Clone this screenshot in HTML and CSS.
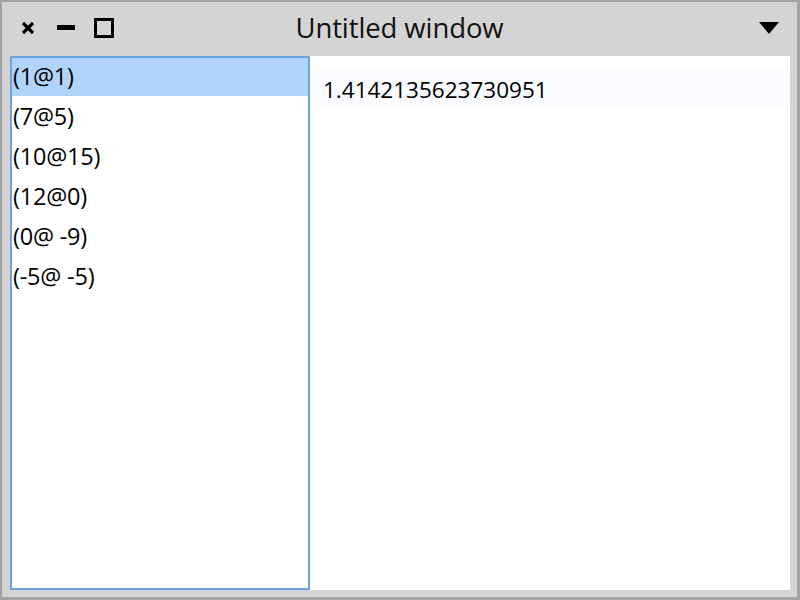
FILE: index.html
```html
<!DOCTYPE html>
<html>
<head>
<meta charset="utf-8">
<link rel="stylesheet" href="styles.css">
</head>
<body>
<div class="window">
  <div class="titlebar">
    <div class="controls">
      <svg class="ico" width="16" height="16" viewBox="0 0 16 16"><path d="M3 3 L13 13 M13 3 L3 13" stroke="#000" stroke-width="3.2" fill="none"/></svg>
      <svg class="ico minus" width="18" height="6" viewBox="0 0 18 6"><rect x="0" y="0" width="18" height="5" fill="#000"/></svg>
      <svg class="ico square" width="20" height="20" viewBox="0 0 20 20"><rect x="1.5" y="1.5" width="17" height="17" stroke="#000" stroke-width="3" fill="none"/></svg>
    </div>
    <div class="title">Untitled window</div>
    <div class="right">
      <svg class="menu" width="20" height="12" viewBox="0 0 20 12"><path d="M0 0 H20 L10 12 Z" fill="#000"/></svg>
    </div>
  </div>
  <div class="content">
    <ul class="list">
      <li class="selected">(1@1)</li>
      <li>(7@5)</li>
      <li>(10@15)</li>
      <li>(12@0)</li>
      <li>(0@ -9)</li>
      <li>(-5@ -5)</li>
    </ul>
    <div class="detail">
      <div class="field">1.4142135623730951</div>
    </div>
  </div>
</div>
</body>
</html>
```
FILE: styles.css
```css
html, body { margin: 0; padding: 0; }
body { width: 800px; height: 600px; overflow: hidden; font-family: "Open Sans", sans-serif; }
.window {
  box-sizing: border-box;
  width: 800px; height: 600px;
  background: #d4d4d4;
  border-top: 2px solid #a3a3a3;
  border-left: 2px solid #a3a3a3;
  border-right: 3px solid #a3a3a3;
  border-bottom: 3px solid #a3a3a3;
  display: flex; flex-direction: column;
}
.titlebar {
  height: 54px;
  display: grid;
  grid-template-columns: 1fr auto 1fr;
  align-items: center;
  padding: 0 18px 0 18px;
}
.controls { display: flex; align-items: center; gap: 21px; margin-top: -2px; }
.ico { display: block; }
.controls .square { margin-left: -2px; }
.title {
  text-align: center;
  font-size: 27.5px; color: #111;
  margin-top: -4px;
  letter-spacing: -0.1px;
}
.right { display: flex; justify-content: flex-end; }
.menu { display: block; margin-top: -2px; }
.content {
  flex: 1;
  display: flex;
  padding: 0 7px 7px 8px;
}
.list {
  list-style: none; margin: 0; padding: 0;
  width: 300px; box-sizing: border-box;
  border: 2px solid #6aa5de;
  background: #fff;
}
.list li {
  height: 38px; line-height: 36px;
  margin-bottom: 2px;
  font-size: 23.5px; color: #000;
  padding-left: 1px;
  letter-spacing: -0.2px;
}
.list li.selected { background: #b1d5fa; }
.detail {
  flex: 1;
  background: #fff;
  padding-top: 14px;
}
.field {
  margin-left: 2px;
  height: 36px; line-height: 39px;
  background: #f9fbfe;
  padding-left: 11px;
  font-size: 22.5px; color: #000;
}
```
